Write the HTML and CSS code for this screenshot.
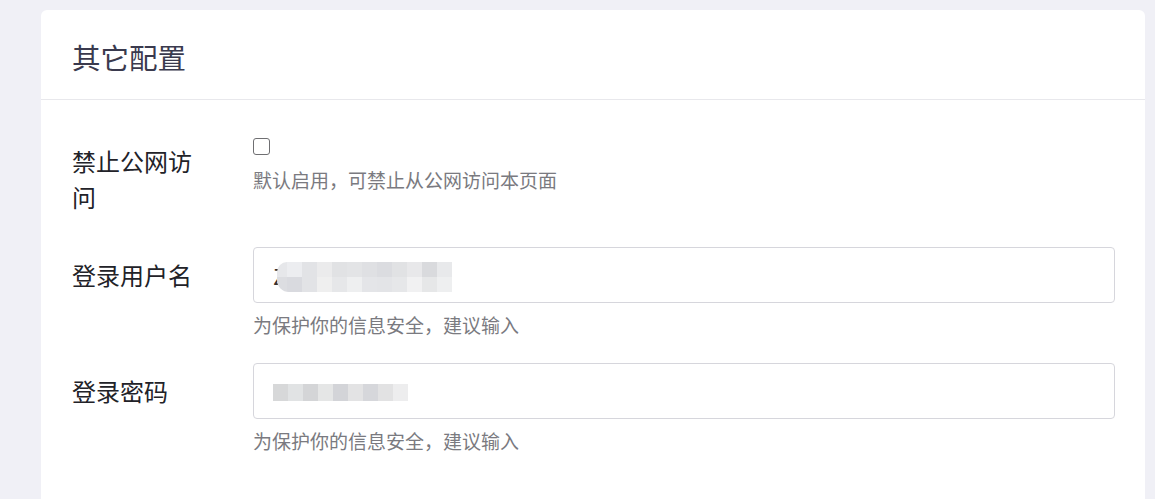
FILE: index.html
```html
<!DOCTYPE html>
<html lang="zh-CN">
<head>
    <meta charset="UTF-8">
    <meta name="viewport" content="width=device-width, initial-scale=1.0">
    <title>其它配置</title>
    <link rel="stylesheet" href="styles.css">
</head>
<body>
    <div class="card">
        <div class="card-header">
            <h2>其它配置</h2>
        </div>
        <div class="card-body">
            <div class="form-row">
                <label class="form-label">禁止公网访问</label>
                <div class="form-control">
                    <div class="check-line"><span class="checkbox"></span></div>
                    <p class="help">默认启用，可禁止从公网访问本页面</p>
                </div>
            </div>

            <div class="form-row">
                <label class="form-label">登录用户名</label>
                <div class="form-control">
                    <div class="input">
                        <span class="input-text">Z</span>
                        <span class="mosaic two-rows">
                            <i style="background:#e6e7ea"></i><i style="background:#ecedf0"></i><i style="background:#e2e3e6"></i><i style="background:#ebebec"></i><i style="background:#e1e2e4"></i><i style="background:#e3e4e6"></i><i style="background:#dfe0e3"></i><i style="background:#dbdce0"></i><i style="background:#e1e2e4"></i><i style="background:#e8e8ea"></i><i style="background:#d9dadd"></i><i style="background:#e8e9eb"></i>
                            <i style="background:#dcdde1"></i><i style="background:#d9dadf"></i><i style="background:#e2e3e6"></i><i style="background:#efefef"></i><i style="background:#e6e7e9"></i><i style="background:#eeeff0"></i><i style="background:#e4e5e8"></i><i style="background:#e3e4e7"></i><i style="background:#e6e7e9"></i><i style="background:#f1f1f2"></i><i style="background:#e6e7e8"></i><i style="background:#eeeff0"></i>
                        </span>
                    </div>
                    <p class="help">为保护你的信息安全，建议输入</p>
                </div>
            </div>

            <div class="form-row">
                <label class="form-label">登录密码</label>
                <div class="form-control">
                    <div class="input">
                        <span class="mosaic">
                            <i style="background:#d7d8d9"></i><i style="background:#e1e3e4"></i><i style="background:#d4d5d7"></i><i style="background:#e5e6e6"></i><i style="background:#d3d4d8"></i><i style="background:#e3e3e4"></i><i style="background:#d6d7db"></i><i style="background:#e2e2e3"></i><i style="background:#ededee"></i>
                        </span>
                    </div>
                    <p class="help">为保护你的信息安全，建议输入</p>
                </div>
            </div>
        </div>
    </div>
</body>
</html>
```

FILE: styles.css
```css
body {
    margin: 0;
    padding: 10px 10px 0 41px;
    background-color: #f0f0f6;
    font-family: 'Noto Sans CJK SC', 'Noto Sans', sans-serif;
}

.card {
    background-color: #ffffff;
    border-radius: 6px 6px 0 0;
    width: 1104px;
    min-height: 489px;
}

.card-header {
    padding: 26px 31px 22px;
    border-bottom: 1px solid #e8e8ec;
}

.card-header h2 {
    margin: 0;
    font-size: 28.5px;
    line-height: 41px;
    font-weight: 400;
    color: #3a3a4e;
}

.card-body {
    padding: 33px 30px 0 31px;
}

.form-row {
    display: flex;
    margin-bottom: 24px;
}

.form-label {
    flex: 0 0 130px;
    margin-right: 51px;
    padding: 10px 0 8px;
    font-size: 24px;
    line-height: 36px;
    color: #222228;
}

.form-control {
    flex: 1;
}

.check-line {
    height: 24px;
}

.checkbox {
    display: block;
    width: 15px;
    height: 15px;
    margin-top: 5px;
    border: 1.5px solid #6f6f72;
    border-radius: 3px;
}

.input {
    display: flex;
    align-items: center;
    box-sizing: border-box;
    height: 56px;
    padding: 0 19px;
    border: 1px solid #d6d6dc;
    border-radius: 4px;
    font-size: 22px;
    color: #333;
}

.input-text {
    line-height: 30px;
}

.mosaic {
    display: grid;
    grid-template-columns: repeat(9, 15px);
    grid-auto-rows: 17px;
    margin-top: 2px;
}

.mosaic.two-rows {
    grid-template-columns: 10px repeat(11, 15px);
    grid-auto-rows: 15px;
    margin-top: 4px;
    margin-left: -9px;
    border-radius: 10px 0 0 12px;
    overflow: hidden;
}

.mosaic i {
    display: block;
}

.help {
    margin: 4px 0 0;
    font-size: 19px;
    line-height: 28px;
    color: #7a7a80;
}

.input + .help {
    margin-top: 8px;
}
```
